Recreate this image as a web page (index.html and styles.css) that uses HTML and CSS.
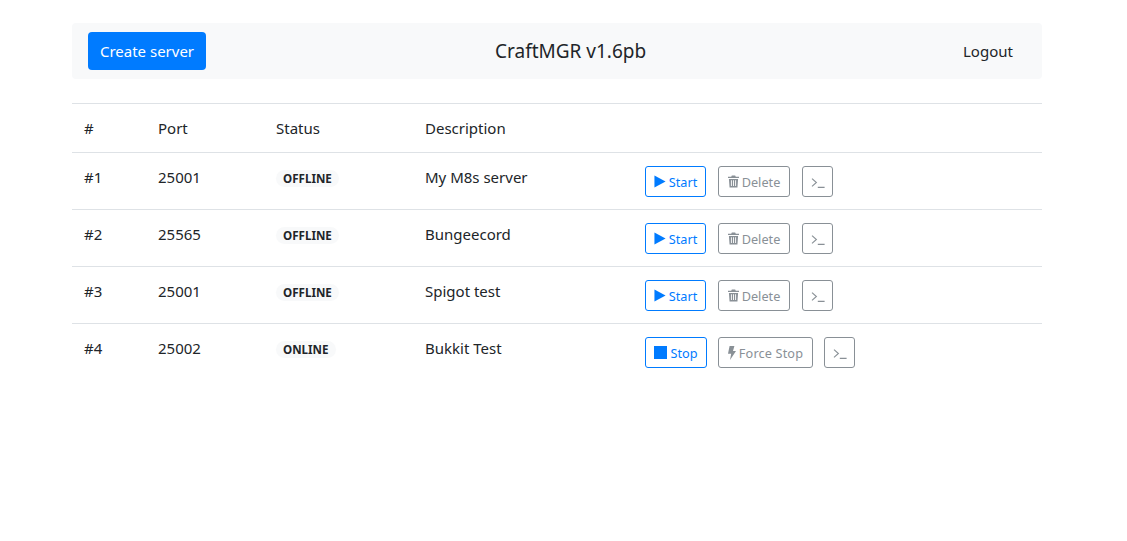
FILE: index.html
```html
<!DOCTYPE html>
<html lang="en">
<head>
<meta charset="utf-8">
<title>CraftMGR</title>
<link rel="stylesheet" href="styles.css">
</head>
<body>
<svg class="defs" width="0" height="0" aria-hidden="true">
  <symbol id="i-play" viewBox="0 0 12 14"><path d="M0 0.6 12 7 0 13.4z"/></symbol>
  <symbol id="i-stop" viewBox="0 0 13 13"><rect width="13" height="13"/></symbol>
  <symbol id="i-trash" viewBox="0 0 12 14"><path d="M4.2 0.5h3.6l.7 1.4H12v1.4H0V1.9h3.5zM1 4.2h10l-.7 9.3H1.7zM3.2 5.6v6.4h1V5.6zM5.5 5.6v6.4h1V5.6zM7.8 5.6v6.4h1V5.6z" fill-rule="evenodd"/></symbol>
  <symbol id="i-bolt" viewBox="0 0 8 14"><path d="M1.6 0H6.4L5 4.9H8L2 14 3.2 7.8H0z"/></symbol>
  <symbol id="i-term" viewBox="0 0 14 10"><path d="M1 .6 5.4 4.5 1 8.4M6.8 9.4h6.8" fill="none" stroke="currentColor" stroke-width="1.1"/></symbol>
</svg>
<main class="page">
  <nav class="navbar">
    <a class="btn-create">Create server</a>
    <span class="brand">CraftMGR v1.6pb</span>
    <a class="logout">Logout</a>
  </nav>
  <table class="servers">
    <thead>
      <tr><th class="c-id">#</th><th class="c-port">Port</th><th class="c-status">Status</th><th class="c-desc">Description</th><th></th></tr>
    </thead>
    <tbody>
      <tr>
        <td>#1</td><td>25001</td><td><span class="badge">OFFLINE</span></td><td>My M8s server</td>
        <td><div class="actions">
          <button class="btn primary w-start"><svg class="ic-play"><use href="#i-play"/></svg>Start</button>
          <button class="btn muted w-delete"><svg class="ic-trash"><use href="#i-trash"/></svg>Delete</button>
          <button class="btn muted term"><svg class="ic-term"><use href="#i-term"/></svg></button>
        </div></td>
      </tr>
      <tr>
        <td>#2</td><td>25565</td><td><span class="badge">OFFLINE</span></td><td>Bungeecord</td>
        <td><div class="actions">
          <button class="btn primary w-start"><svg class="ic-play"><use href="#i-play"/></svg>Start</button>
          <button class="btn muted w-delete"><svg class="ic-trash"><use href="#i-trash"/></svg>Delete</button>
          <button class="btn muted term"><svg class="ic-term"><use href="#i-term"/></svg></button>
        </div></td>
      </tr>
      <tr>
        <td>#3</td><td>25001</td><td><span class="badge">OFFLINE</span></td><td>Spigot test</td>
        <td><div class="actions">
          <button class="btn primary w-start"><svg class="ic-play"><use href="#i-play"/></svg>Start</button>
          <button class="btn muted w-delete"><svg class="ic-trash"><use href="#i-trash"/></svg>Delete</button>
          <button class="btn muted term"><svg class="ic-term"><use href="#i-term"/></svg></button>
        </div></td>
      </tr>
      <tr>
        <td>#4</td><td>25002</td><td><span class="badge">ONLINE</span></td><td>Bukkit Test</td>
        <td><div class="actions actions-tight">
          <button class="btn primary w-stop"><svg class="ic-stop"><use href="#i-stop"/></svg>Stop</button>
          <button class="btn muted w-force"><svg class="ic-bolt"><use href="#i-bolt"/></svg>Force Stop</button>
          <button class="btn muted term"><svg class="ic-term"><use href="#i-term"/></svg></button>
        </div></td>
      </tr>
    </tbody>
  </table>
</main>
</body>
</html>
```
FILE: styles.css
```css
* { box-sizing: border-box; }
html, body { margin: 0; padding: 0; background: #fff; }
body {
  font-family: "Noto Sans", "Open Sans", sans-serif;
  font-size: 15px;
  line-height: 24px;
  color: #212529;
}
.defs { position: absolute; }
.page { width: 970px; margin: 23px 0 0 72px; }

.navbar {
  display: flex;
  align-items: center;
  justify-content: space-between;
  height: 56px;
  padding: 0 16px;
  background: #f8f9fa;
  border-radius: 4px;
}
.btn-create {
  display: flex;
  align-items: center;
  justify-content: center;
  width: 118px;
  height: 38px;
  background: #007bff;
  color: #fff;
  border-radius: 4px;
}
.brand { width: 150px; font-size: 19px; text-align: center; white-space: nowrap; }
.logout { width: 92px; padding-left: 29px; white-space: nowrap; }

.servers { width: 970px; margin-top: 24px; border-collapse: collapse; table-layout: fixed; }
.servers th, .servers td {
  padding: 12px;
  text-align: left;
  vertical-align: top;
  font-weight: 400;
  border-top: 1px solid #dee2e6;
}
.servers thead th { height: 49px; }
.servers tbody td { height: 57px; }
.c-id { width: 74px; }
.c-port { width: 118px; }
.c-status { width: 149px; }
.c-desc { width: 220px; }

.badge {
  display: inline-block;
  padding: 0 7px;
  height: 17px;
  line-height: 17px;
  font-size: 11.6px;
  font-weight: 700;
  background: #f8f9fa;
  border-radius: 9px;
}

.actions { display: flex; gap: 12px; margin-top: 1px; }
.actions-tight { gap: 11px; }
.btn {
  display: inline-flex;
  align-items: center;
  justify-content: center;
  gap: 3px;
  height: 31px;
  padding: 0;
  font: inherit;
  font-size: 12.7px;
  background: #fff;
  border: 1px solid;
  border-radius: 3px;
}
.primary { color: #007bff; border-color: #007bff; fill: #007bff; }
.muted { color: #6c757d; border-color: #6c757d; fill: #6c757d; opacity: .8; }
.w-start { width: 61px; }
.w-stop { width: 62px; }
.w-delete { width: 72px; }
.w-force { width: 95px; letter-spacing: .15px; }
.term { width: 31px; }
.ic-play { width: 12px; height: 13px; }
.ic-stop { width: 13px; height: 13px; }
.ic-trash { width: 11px; height: 13px; }
.ic-bolt { width: 8px; height: 14px; }
.ic-term { width: 14px; height: 10px; margin-top: 2px; }
```
